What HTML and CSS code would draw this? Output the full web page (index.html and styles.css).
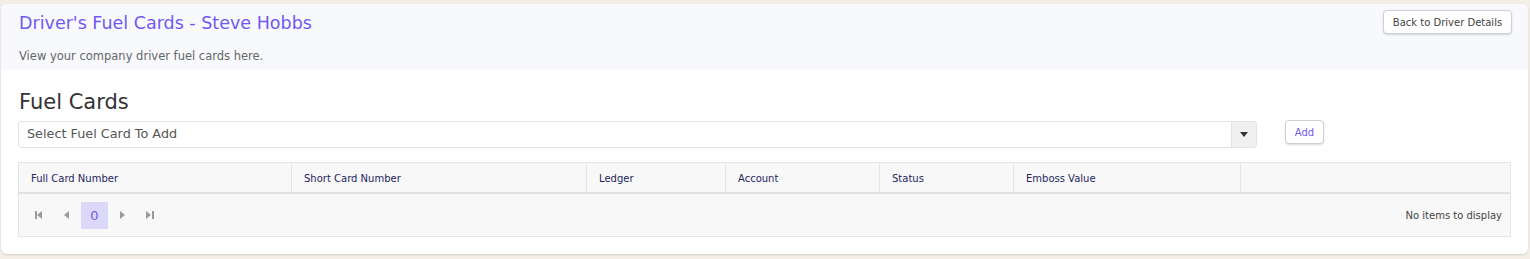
FILE: index.html
```html
<!DOCTYPE html>
<html>
<head>
<meta charset="utf-8">
<link rel="stylesheet" href="styles.css">
</head>
<body>
<div class="card">
  <div class="page-header">
    <div class="header-text">
      <h1 class="title">Driver's Fuel Cards - Steve Hobbs</h1>
      <p class="subtitle">View your company driver fuel cards here.</p>
    </div>
    <button class="btn back-btn">Back to Driver Details</button>
  </div>
  <div class="content">
    <h2 class="section-title">Fuel Cards</h2>
    <div class="add-row">
      <div class="select">
        <span class="select-text">Select Fuel Card To Add</span>
        <span class="select-arrow"><svg width="8" height="5" viewBox="0 0 8 5"><path d="M0 0H8L4 5Z" fill="#333"/></svg></span>
      </div>
      <button class="btn add-btn">Add</button>
    </div>
    <div class="grid">
      <div class="grid-head">
        <div class="th c1">Full Card Number</div>
        <div class="th c2">Short Card Number</div>
        <div class="th c3">Ledger</div>
        <div class="th c4">Account</div>
        <div class="th c5">Status</div>
        <div class="th c6">Emboss Value</div>
        <div class="th c7"></div>
      </div>
      <div class="pager">
        <div class="pager-nav">
          <span class="pg-icon"><svg width="8" height="8" viewBox="0 0 8 8"><rect x="0" y="0" width="2" height="8" fill="#9a9a9a"/><path d="M7 0V8L2 4Z" fill="#9a9a9a"/></svg></span>
          <span class="pg-icon"><svg width="6" height="8" viewBox="0 0 6 8"><path d="M5 0V8L0 4Z" fill="#9a9a9a"/></svg></span>
          <span class="pg-current">0</span>
          <span class="pg-icon"><svg width="6" height="8" viewBox="0 0 6 8"><path d="M1 0V8L6 4Z" fill="#9a9a9a"/></svg></span>
          <span class="pg-icon"><svg width="8" height="8" viewBox="0 0 8 8"><path d="M0 0V8L5 4Z" fill="#9a9a9a"/><rect x="6" y="0" width="2" height="8" fill="#9a9a9a"/></svg></span>
        </div>
        <div class="pager-info">No items to display</div>
      </div>
    </div>
  </div>
</div>
</body>
</html>
```
FILE: styles.css
```css
* { box-sizing: border-box; }
html, body { margin: 0; padding: 0; }
body {
  background: #f3efe7;
  font-family: "DejaVu Sans", Verdana, sans-serif;
  padding: 4px 2px 5px 1px;
  height: 259px;
}
.card {
  background: #fff;
  border-radius: 6px;
  box-shadow: 0 1px 2px rgba(0,0,0,0.12);
  overflow: hidden;
  height: 250px;
}
.page-header {
  background: #f8f9fc;
  height: 66px;
  display: flex;
  justify-content: space-between;
  align-items: flex-start;
  padding: 0 16px 0 18px;
}
.title {
  margin: 9px 0 0 0;
  font-size: 17.5px;
  font-weight: normal;
  color: #7158f0;
  line-height: 20px;
}
.subtitle {
  margin: 15px 0 0 0;
  font-size: 11.5px;
  color: #666;
  line-height: 16px;
}
.btn {
  font-family: "DejaVu Sans", Verdana, sans-serif;
  background: #fff;
  border: 1px solid #cfcfd8;
  border-radius: 4px;
  box-shadow: 0 1px 2px rgba(0,0,0,0.15);
  cursor: pointer;
}
.back-btn {
  margin-top: 6px;
  height: 24px;
  width: 129px;
  font-size: 10px;
  color: #444;
  padding: 0;
}
.content {
  padding: 0 18px 0 17px;
}
.section-title {
  margin: 20px 0 0 1px;
  font-size: 21px;
  font-weight: normal;
  color: #333;
  line-height: 24px;
}
.add-row {
  display: flex;
  align-items: flex-start;
  margin-top: 7px;
}
.select {
  width: 1239px;
  height: 27px;
  border: 1px solid #e3e3e3;
  border-radius: 3px;
  display: flex;
  justify-content: space-between;
  align-items: stretch;
  overflow: hidden;
}
.select-text {
  font-size: 12.8px;
  color: #555;
  padding-left: 8px;
  line-height: 24px;
}
.select-arrow {
  width: 25px;
  background: #f0f0f0;
  border-left: 1px solid #e3e3e3;
  display: flex;
  align-items: center;
  justify-content: center;
}
.add-btn {
  margin-left: 28px;
  margin-top: -1px;
  height: 24px;
  width: 39px;
  font-size: 10px;
  color: #7158f0;
  padding: 0;
}
.grid {
  margin-top: 14px;
  border: 1px solid #e5e5e5;
  width: 1493px;
  background: #f8f8f8;
}
.grid-head {
  display: flex;
  height: 31px;
  border-bottom: 2px solid #e2e2e2;
}
.th {
  font-size: 10px;
  color: #262660;
  padding-left: 12px;
  line-height: 32px;
  border-left: 1px solid #e5e5e5;
}
.th.c1 { border-left: none; width: 272px; }
.c2 { width: 295px; }
.c3 { width: 139px; }
.c4 { width: 154px; }
.c5 { width: 134px; }
.c6 { width: 227px; }
.c7 { flex: 1; }
.pager {
  height: 42px;
  display: flex;
  justify-content: space-between;
  align-items: center;
  padding: 0 8px 0 6px;
}
.pager-nav {
  display: flex;
  align-items: center;
}
.pg-icon {
  width: 28px;
  height: 27px;
  display: flex;
  align-items: center;
  justify-content: center;
}
.pg-current {
  width: 27px;
  height: 27px;
  background: #dcd8fa;
  color: #7158f0;
  font-size: 13px;
  display: flex;
  align-items: center;
  justify-content: center;
}
.pager-info {
  font-size: 10px;
  color: #444;
}
```
